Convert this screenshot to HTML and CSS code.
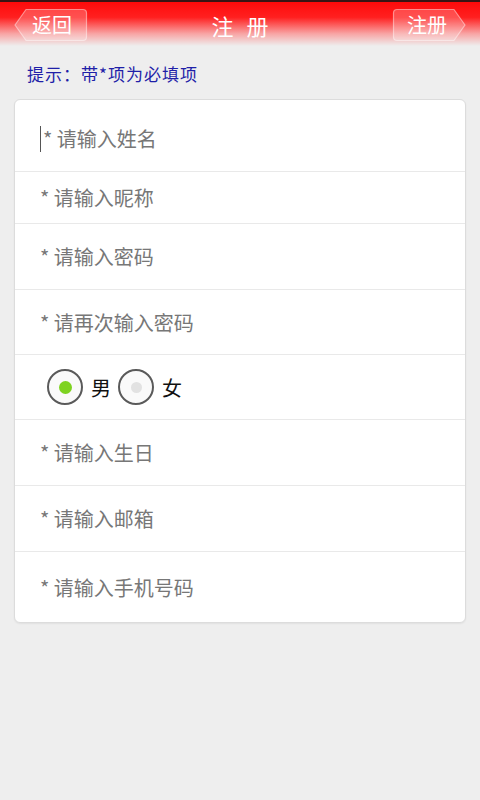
FILE: index.html
```html
<!DOCTYPE html>
<html lang="zh-CN">
<head>
    <meta charset="UTF-8">
    <meta name="viewport" content="width=device-width, initial-scale=1.0">
    <title>注册</title>
    <link rel="stylesheet" href="styles.css">
</head>
<body>
    <div class="header">
        <div class="nav-btn back">
            <svg class="btn-shape" viewBox="0 0 74 34" preserveAspectRatio="none">
                <path d="M1 17 L12 1.5 H69 Q72.5 1.5 72.5 5 V29 Q72.5 32.5 69 32.5 H12 Z" />
            </svg>
            <span class="btn-text">返回</span>
        </div>
        <div class="title">注 册</div>
        <div class="nav-btn forward">
            <svg class="btn-shape" viewBox="0 0 74 34" preserveAspectRatio="none">
                <path d="M73 17 L62 1.5 H5 Q1.5 1.5 1.5 5 V29 Q1.5 32.5 5 32.5 H62 Z" />
            </svg>
            <span class="btn-text">注册</span>
        </div>
    </div>

    <p class="hint">提示：带*项为必填项</p>

    <div class="form-card">
        <div class="row row-first"><span class="caret"></span><span class="field">* 请输入姓名</span></div>
        <div class="row row-short"><span class="field">* 请输入昵称</span></div>
        <div class="row row-mid"><span class="field">* 请输入密码</span></div>
        <div class="row"><span class="field">* 请再次输入密码</span></div>
        <div class="row gender">
            <span class="radio checked"></span><span class="radio-label">男</span>
            <span class="radio"></span><span class="radio-label">女</span>
        </div>
        <div class="row row-mid"><span class="field">* 请输入生日</span></div>
        <div class="row row-mid"><span class="field">* 请输入邮箱</span></div>
        <div class="row row-last"><span class="field">* 请输入手机号码</span></div>
    </div>
</body>
</html>
```

FILE: styles.css
```css
body {
    margin: 0;
    font-family: "Noto Sans CJK SC", "Noto Sans", sans-serif;
    background: #eeeeee;
    min-height: 800px;
}
.header {
    height: 46px;
    box-sizing: border-box;
    border-top: 2px solid #3a1414;
    padding: 6px 14px 0;
    display: flex;
    justify-content: space-between;
    align-items: flex-start;
    background: linear-gradient(180deg, #ff0a0a 0%, #ff2020 35%, #f8a4a4 72%, #eeeeee 100%);
}
.nav-btn {
    position: relative;
    width: 74px;
    height: 34px;
    display: flex;
    align-items: center;
    justify-content: center;
}
.btn-shape {
    position: absolute;
    inset: 0;
    width: 100%;
    height: 100%;
}
.btn-shape path {
    fill: rgba(255, 255, 255, 0.22);
    stroke: rgba(255, 255, 255, 0.45);
    stroke-width: 1.2;
}
.btn-text {
    position: relative;
    color: #ffffff;
    font-size: 20px;
    line-height: 34px;
}
.back .btn-text {
    margin-left: 2px;
}
.forward .btn-text {
    margin-right: 4px;
}
.title {
    color: #ffffff;
    font-size: 22px;
    line-height: 34px;
    letter-spacing: 4px;
    padding-left: 4px;
}
.hint {
    margin: 17px 0 0 27px;
    height: 22px;
    line-height: 22px;
    font-size: 17px;
    letter-spacing: 1px;
    color: #1f1fa8;
}
.form-card {
    margin: 14px 14px 0;
    background: #ffffff;
    border: 1px solid #dcdcdc;
    border-radius: 6px;
    box-shadow: 0 1px 2px rgba(0, 0, 0, 0.06);
}
.row {
    height: 65px;
    display: flex;
    align-items: center;
    padding-left: 25px;
    border-top: 1px solid #e9e9e9;
    box-sizing: border-box;
}
.row-first {
    height: 71px;
    border-top: none;
    padding-top: 6px;
}
.row-short {
    height: 52px;
}
.row-mid {
    height: 66px;
}
.row-last {
    height: 71px;
}
.field {
    font-size: 20px;
    color: #777777;
}
.caret {
    width: 1px;
    height: 26px;
    background: #555555;
    margin-right: 2px;
}
.gender {
    padding-left: 32px;
}
.radio {
    width: 32px;
    height: 32px;
    border: 2px solid #5a5a5a;
    border-radius: 50%;
    background: #fafafa;
    display: flex;
    align-items: center;
    justify-content: center;
}
.radio::after {
    content: "";
    width: 11px;
    height: 11px;
    border-radius: 50%;
    background: #e2e2e2;
}
.radio.checked::after {
    width: 13px;
    height: 13px;
    background: #7ed321;
}
.radio-label {
    font-size: 20px;
    color: #111111;
    margin: 0 7px 0 8px;
}
```
